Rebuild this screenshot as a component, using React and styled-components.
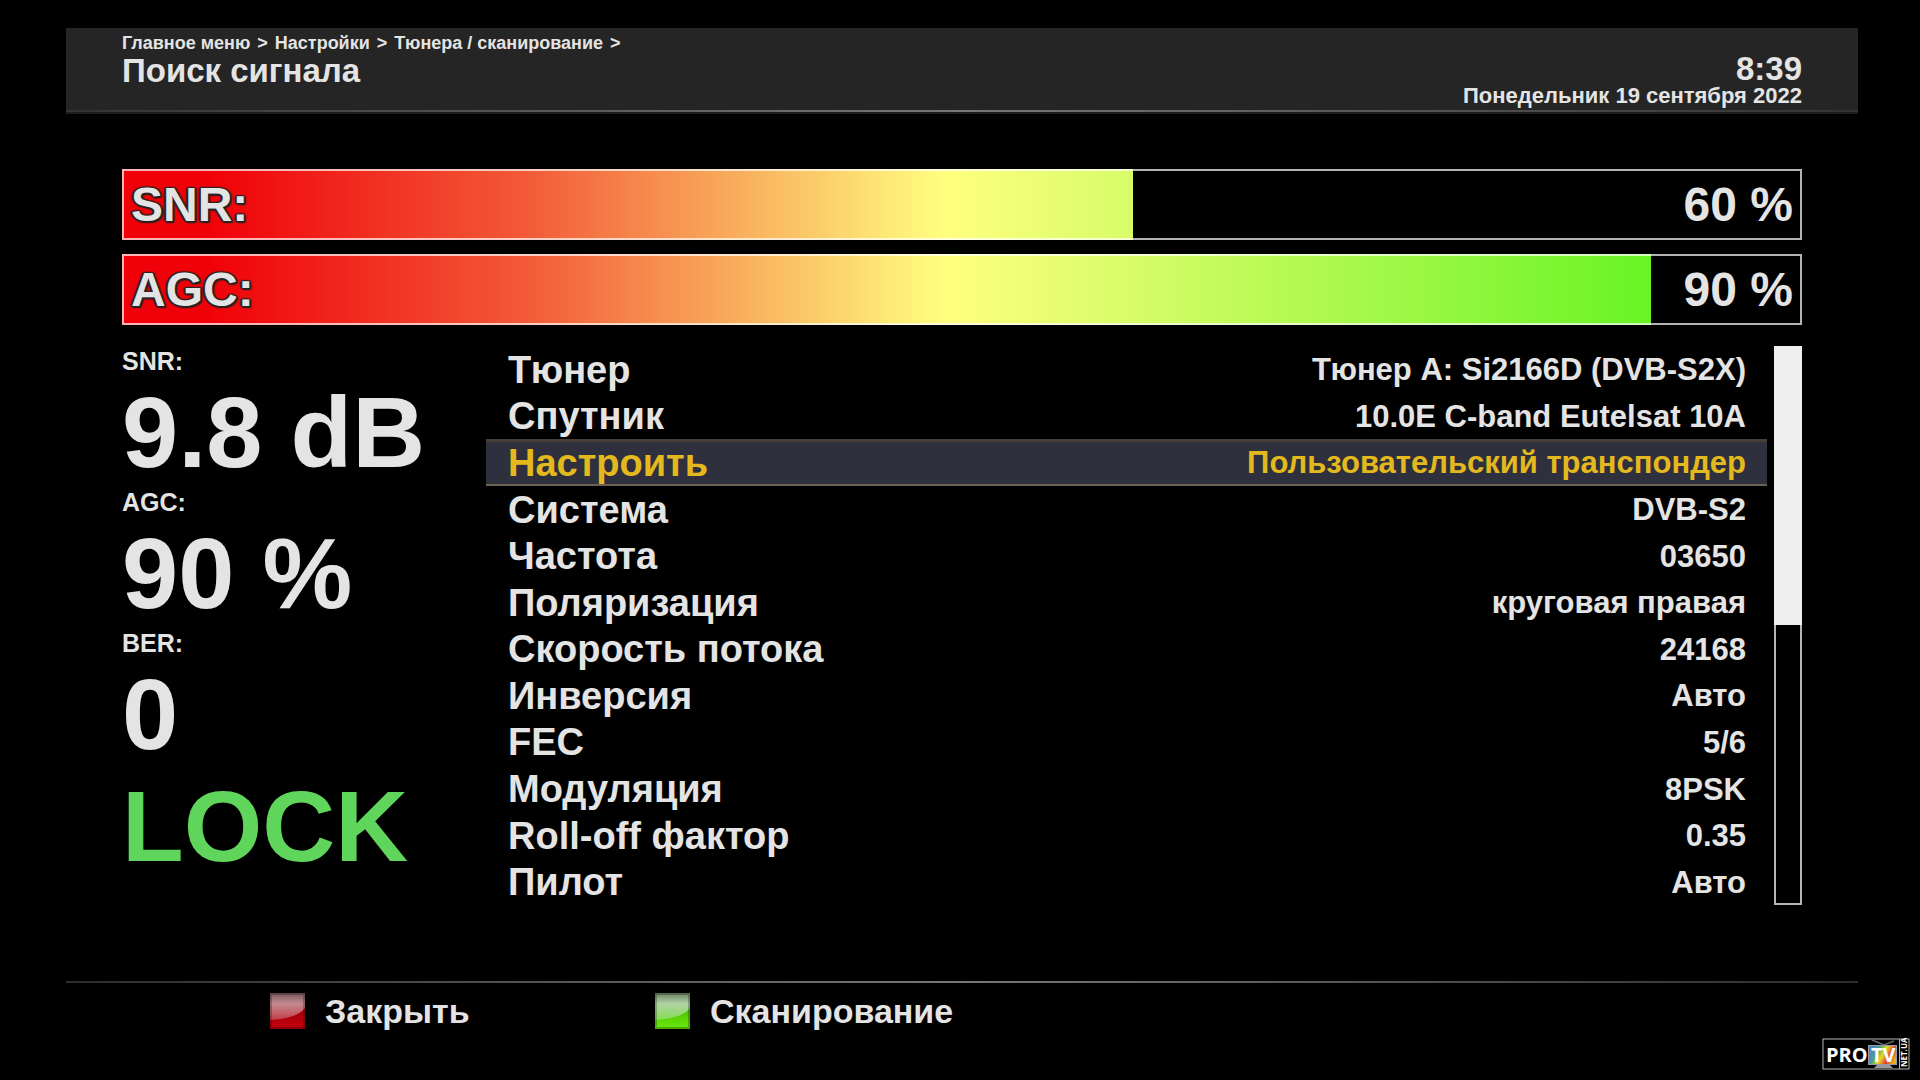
import React from "react";
import styled, { createGlobalStyle, css } from "styled-components";

const color = {
  text: "#e4e4e4",
  panel: "#252525",
  accent: "#e3b91e",
  lock: "#5fd65b",
};

const GlobalStyle = createGlobalStyle`
  *, *::before, *::after { box-sizing: border-box; }
  body {
    margin: 0;
    background: #000;
    color: ${color.text};
    font-family: "Liberation Sans", Arial, sans-serif;
    font-weight: 700;
  }
  h1, p, ul, dl, dd { margin: 0; padding: 0; }
  button {
    border: 0;
    padding: 0;
    background: none;
    color: inherit;
    font: inherit;
    text-align: left;
    cursor: pointer;
  }
`;

const Screen = styled.div`
  display: flex;
  flex-direction: column;
  min-height: 100vh;
  padding: 28px 62px 0 66px;
`;

const Header = styled.header`
  display: flex;
  justify-content: space-between;
  height: 84px;
  padding: 0 56px;
  background: ${color.panel};
  border-bottom: 2px solid;
  border-image: linear-gradient(90deg, #333, #77777b 50%, #333) 1;
  box-shadow: 0 2px 0 #1d1d1d;
`;

const Heading = styled.div`
  padding-top: 4px;
`;

const Crumbs = styled.nav`
  display: flex;
  gap: 7px;
  font-size: 18px;
  line-height: 22px;

  a {
    color: inherit;
    text-decoration: none;
  }
`;

const Title = styled.h1`
  font-size: 33px;
  line-height: 33px;
`;

const Clock = styled.div`
  padding-top: 24px;
  text-align: right;
`;

const Time = styled.p`
  font-size: 33px;
  line-height: 33px;
`;

const DateText = styled.p`
  font-size: 22px;
  line-height: 22px;
`;

const Main = styled.main`
  display: flex;
  flex-direction: column;
  gap: 21px;
  padding: 57px 56px 0;
`;

const Meters = styled.section`
  display: grid;
  gap: 14px;
`;

const Meter = styled.div`
  position: relative;
  display: flex;
  align-items: center;
  justify-content: space-between;
  height: 71px;
  padding: 1px 9px 0;
  font-size: 48px;
  line-height: 70px;
  background: linear-gradient(90deg, #f00008 5%, #f25a38 24%, #ffff80 49%, #5af31c 95%);
`;

const MeterEmpty = styled.div`
  position: absolute;
  inset: 0 0 0 auto;
  background: #000;
`;

const MeterFrame = styled.div`
  position: absolute;
  inset: 0;
  border: 2px solid rgba(255, 255, 255, 0.7);
`;

const MeterLabel = styled.span`
  position: relative;
  text-shadow: -1px -1px 1px #2b2222, 1px -1px 1px #2b2222, -1px 1px 1px #2b2222,
    2px 2px 1px #2b2222, 0 2px 1px #2b2222, 2px 0 1px #2b2222, -2px 0 1px #2b2222;
`;

const MeterValue = styled.span`
  position: relative;
`;

const Body = styled.section`
  display: grid;
  grid-template-columns: 364px 1fr 28px;
  min-height: 559px;
`;

const Stats = styled.dl`
  padding-top: 1px;
`;

const StatLabel = styled.dt`
  font-size: 25px;
  line-height: 29px;
`;

const StatValue = styled.dd`
  color: ${(p) => (p.$lock ? color.lock : "inherit")};
  font-size: 101px;
  line-height: 112px;
  white-space: nowrap;
`;

const Settings = styled.ul`
  display: grid;
  grid-auto-rows: 1fr;
  margin-right: 7px;
  list-style: none;
`;

const SettingItem = styled.li`
  display: grid;
`;

const SettingRow = styled.button`
  display: flex;
  align-items: center;
  justify-content: space-between;
  padding: 2px 21px 0 22px;
  ${(p) =>
    p.$selected &&
    css`
      color: ${color.accent};
      background: #2f303d;
      box-shadow: inset 0 3px 0 #453f38, inset 0 -2px 0 #6b6253;
    `}
`;

const SettingName = styled.span`
  font-size: 38px;
`;

const SettingValue = styled.span`
  font-size: 31px;
`;

const ScrollTrack = styled.div`
  border: 2px solid #b5b5b5;
`;

const ScrollThumb = styled.div`
  height: 49.6%;
  background: #efefef;
  box-shadow: 0 0 0 2px #efefef;
`;

const Footer = styled.footer`
  display: grid;
  grid-template-columns: repeat(2, 385px);
  align-items: start;
  height: 99px;
  margin-top: auto;
  padding: 10px 204px 0;
  border-top: 2px solid;
  border-image: linear-gradient(90deg, #2c2c2c, #77777b 50%, #2c2c2c) 1;
`;

const KeyButton = styled.button`
  display: flex;
  align-items: center;
  gap: 20px;
  font-size: 34px;
  line-height: 36px;
`;

const Watermark = styled.a`
  position: absolute;
  right: 10px;
  bottom: 10px;
  line-height: 0;
`;

const crumbs = ["Главное меню", "Настройки", "Тюнера / сканирование"];

const meters = [
  { label: "SNR:", value: 60, fill: 60.2 },
  { label: "AGC:", value: 90, fill: 91 },
];

const stats = [
  ["SNR:", "9.8 dB"],
  ["AGC:", "90 %"],
  ["BER:", "0"],
];

const settings = [
  ["Тюнер", "Тюнер A: Si2166D (DVB-S2X)"],
  ["Спутник", "10.0E C-band Eutelsat 10A"],
  ["Настроить", "Пользовательский транспондер"],
  ["Система", "DVB-S2"],
  ["Частота", "03650"],
  ["Поляризация", "круговая правая"],
  ["Скорость потока", "24168"],
  ["Инверсия", "Авто"],
  ["FEC", "5/6"],
  ["Модуляция", "8PSK"],
  ["Roll-off фактор", "0.35"],
  ["Пилот", "Авто"],
];

const keys = [
  { id: "red", label: "Закрыть", gloss: ["#74585a", "#c48a8f", "#c23e4a"], low: "#a2000a", base: "#c0000c" },
  { id: "green", label: "Сканирование", gloss: ["#6a8062", "#b2d3a4", "#84dc52"], low: "#4cc400", base: "#66e40c" },
];

function KeyIcon({ id, gloss, low, base }) {
  return (
    <svg width="35" height="36" viewBox="0 0 35 36" aria-hidden="true">
      <defs>
        <linearGradient id={`${id}-base`} x1="0" y1="0" x2="0" y2="1">
          <stop offset="0.5" stopColor={low} />
          <stop offset="0.9" stopColor={base} />
        </linearGradient>
        <linearGradient id={`${id}-gloss`} x1="0" y1="0" x2="0" y2="1">
          <stop offset="0" stopColor={gloss[0]} />
          <stop offset="0.4" stopColor={gloss[1]} />
          <stop offset="1" stopColor={gloss[2]} />
        </linearGradient>
      </defs>
      <rect width="35" height="36" fill={`url(#${id}-base)`} />
      <path d="M0 0H35V15C29 23 15 26 0 27Z" fill={`url(#${id}-gloss)`} />
      <rect x="1" y="1" width="33" height="34" fill="none" stroke="#000" strokeOpacity="0.25" strokeWidth="2" />
    </svg>
  );
}

function ProTvLogo() {
  return (
    <svg width="88" height="32" viewBox="0 0 88 32" role="img" aria-label="PRO TV NET.UA">
      <defs>
        <linearGradient id="tv-screen" x1="0" y1="0.3" x2="1" y2="0.7">
          <stop offset="0" stopColor="#3a6fb8" />
          <stop offset="0.28" stopColor="#3fae5c" />
          <stop offset="0.5" stopColor="#e8d92c" />
          <stop offset="0.75" stopColor="#e2412c" />
          <stop offset="1" stopColor="#e8b020" />
        </linearGradient>
      </defs>
      <rect x="1" y="1" width="86" height="30" fill="#000" stroke="#b5b5b5" strokeWidth="1" />
      <path d="M77.5 1V31" stroke="#b5b5b5" />
      <path d="M50 2L62 7L72 3" fill="none" stroke="#666" strokeWidth="1.5" />
      <path d="M46 7H75V27H46Z" fill="#99a" />
      <path d="M47 8H74V26H47Z" fill="url(#tv-screen)" />
      <path d="M47 8H57L50 26H47Z" fill="#5a8fc8" fillOpacity="0.6" />
      <path d="M55 27H68L71 30H52Z" fill="#999" />
      <text x="4" y="24" fill="#fff" fontFamily="Open Sans, sans-serif" fontWeight="700" fontSize="20">PRO</text>
      <text x="49" y="24" fill="#fff" fontFamily="Open Sans, sans-serif" fontWeight="700" fontSize="20">TV</text>
      <text transform="translate(85 29) rotate(-90)" fill="#fff" fontFamily="Open Sans, sans-serif" fontWeight="700" fontSize="8">NET.UA</text>
    </svg>
  );
}

export default function App() {
  const selected = 2;
  return (
    <>
      <GlobalStyle />
      <Screen>
        <Header>
          <Heading>
            <Crumbs aria-label="Путь">
              {crumbs.map((name) => (
                <React.Fragment key={name}>
                  <a href="#menu">{name}</a>
                  <span>&gt;</span>
                </React.Fragment>
              ))}
            </Crumbs>
            <Title>Поиск сигнала</Title>
          </Heading>
          <Clock>
            <Time>8:39</Time>
            <DateText>Понедельник 19 сентября 2022</DateText>
          </Clock>
        </Header>

        <Main>
          <Meters>
            {meters.map((m) => (
              <Meter key={m.label} role="meter" aria-label={m.label} aria-valuenow={m.value}>
                <MeterEmpty style={{ width: `${100 - m.fill}%` }} />
                <MeterFrame />
                <MeterLabel>{m.label}</MeterLabel>
                <MeterValue>{m.value} %</MeterValue>
              </Meter>
            ))}
          </Meters>

          <Body>
            <Stats>
              {stats.map(([label, value]) => (
                <React.Fragment key={label}>
                  <StatLabel>{label}</StatLabel>
                  <StatValue>{value}</StatValue>
                </React.Fragment>
              ))}
              <StatValue $lock>LOCK</StatValue>
            </Stats>
            <Settings>
              {settings.map(([name, value], i) => (
                <SettingItem key={name}>
                  <SettingRow type="button" $selected={i === selected}>
                    <SettingName>{name}</SettingName>
                    <SettingValue>{value}</SettingValue>
                  </SettingRow>
                </SettingItem>
              ))}
            </Settings>
            <ScrollTrack>
              <ScrollThumb />
            </ScrollTrack>
          </Body>
        </Main>

        <Footer>
          {keys.map((k) => (
            <KeyButton key={k.id} type="button">
              <KeyIcon {...k} />
              {k.label}
            </KeyButton>
          ))}
        </Footer>
      </Screen>
      <Watermark href="#protv">
        <ProTvLogo />
      </Watermark>
    </>
  );
}
